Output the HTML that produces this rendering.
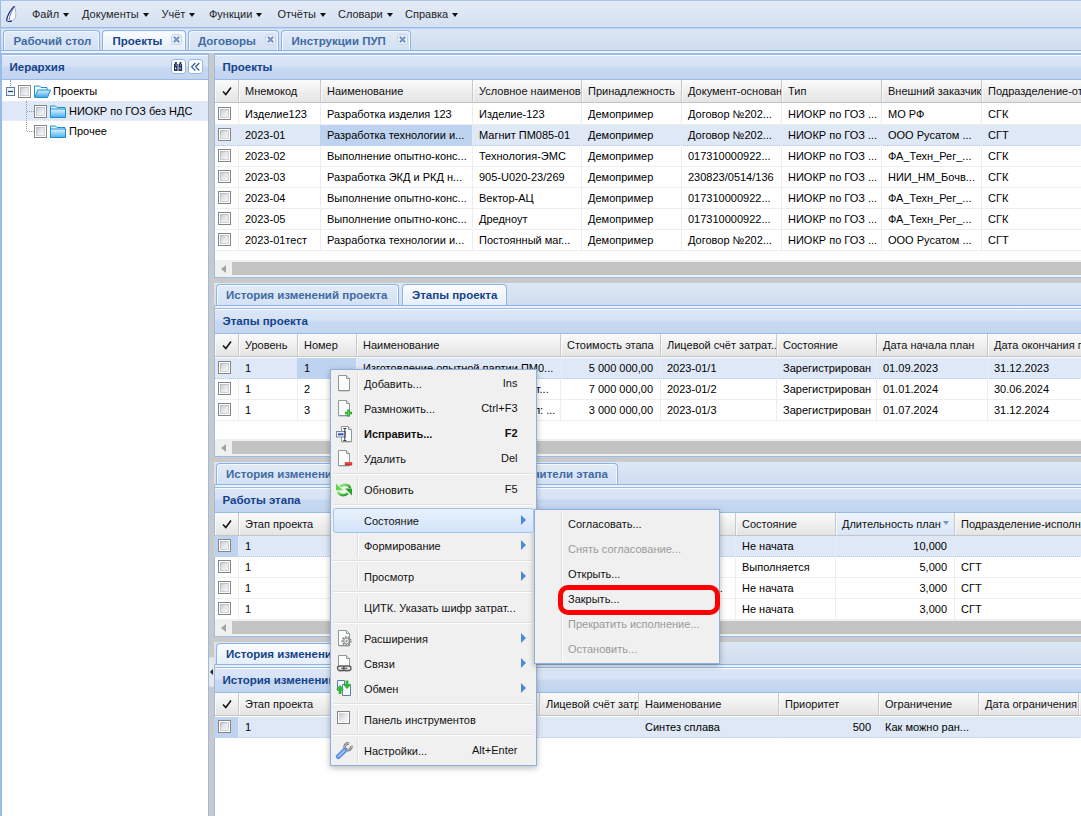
<!DOCTYPE html><html><head><meta charset="utf-8"><style>
*{margin:0;padding:0;box-sizing:border-box}
html,body{width:1081px;height:816px;overflow:hidden;background:#fff}
body{position:relative;font-family:"Liberation Sans",sans-serif;font-size:11px;color:#000}
.a{position:absolute}
.menubar{left:0;top:0;width:1081px;height:28px;background:linear-gradient(#e3ebf6,#d5e1f1);border-top:1px solid #a9c4e8;border-bottom:1px solid #99bbe8;border-left:1px solid #99bbe8}
.mi{position:absolute;top:8px;line-height:13px;color:#1e1e1e;white-space:nowrap}
.dd{display:inline-block;margin-left:4px;vertical-align:1px;width:0;height:0;border-left:3px solid transparent;border-right:3px solid transparent;border-top:4px solid #111}
.strip{position:absolute;background:linear-gradient(#dde8f5,#d0ddef);border-bottom:1px solid #8db2e3}
.strip2{position:absolute;height:3px;background:#eaf1fb;border-bottom:1px solid #99bbe8}
.tab{position:absolute;border:1px solid #8db2e3;border-bottom:none;border-radius:4px 4px 0 0;background:linear-gradient(#e2ebf7,#d3e1f3);box-shadow:inset 1px 1px 0 #f5f8fd,inset -1px 0 0 #f5f8fd}
.tab.act{background:linear-gradient(#fbfdff,#e4edf9);}
.tabt{position:absolute;font-weight:bold;font-size:11.5px;line-height:13px;color:#416aa3;white-space:nowrap}
.act .tabt{color:#15428b}
.cls{position:absolute;width:11px;height:11px;border:1px solid #c3d4ea;border-radius:3px;background:#eef3fa}
.ph{position:absolute;background:linear-gradient(#f6f9fd 0,#f6f9fd 1px,#dbe7f7 1px,#d6e3f5 11px,#c8d9f1 12px,#c2d5f0 100%);border-bottom:1px solid #99bbe8}
.pht{position:absolute;font-weight:bold;font-size:11.5px;line-height:13px;color:#15428b;white-space:nowrap}
.pb{position:absolute;border-left:1px solid #99bbe8;border-right:1px solid #99bbe8;border-bottom:1px solid #99bbe8;background:#fff}
.gh{position:absolute;height:23px;background:linear-gradient(#fbfbfb,#eeeeee 55%,#e4e4e4);border-bottom:1px solid #c5c5c5}
.ghc{position:absolute;top:0;height:22px;border-right:1px solid #c8c8c8;overflow:hidden;white-space:nowrap;line-height:22px;padding-left:7px;color:#111;box-shadow:inset 1px 0 0 #fafafa}
.ghc.sort{background:linear-gradient(#eef4fc,#d9e6f7)}
.row{position:absolute;height:21px;border-bottom:1px solid #ededed;background:#fff}
.row.sel{background:#dfe8f6;border-bottom:1px dotted #b3c7e3}
.c{position:absolute;top:0;height:21px;border-right:1px solid #ededed;overflow:hidden;white-space:nowrap;line-height:20px;padding:0 7px 0 7px;color:#000}
.sel .c{border-right-color:#e4ebf6}
.c.r{text-align:right}
.c.sc{background:#bed3f0}
.cb{position:absolute;width:13px;height:13px;border:1px solid #858585;background:#fff}.cb:after{content:'';position:absolute;left:1px;top:1px;width:9px;height:9px;background:linear-gradient(135deg,#c3c7cf,#e9eaee 55%,#f6f6f6);box-shadow:inset 0 0 0 1px rgba(150,155,165,.35)}
.sb{position:absolute;height:17px;background:#f0f0f0}
.thumb{position:absolute;top:2px;height:13px;background:#c3c3c3}
.sarr{position:absolute;top:5px;width:0;height:0;border-top:4px solid transparent;border-bottom:4px solid transparent;border-right:5px solid #a3a3a3}
.menu{position:absolute;background:#f0f0f0;border:1px solid #8eb0dc;box-shadow:0 2px 6px rgba(0,0,0,.28)}
.mit{position:absolute;line-height:13px;white-space:nowrap;color:#111;z-index:3}
.mit.dis{color:#9a9a9a}
.msep{position:absolute;height:2px;border-top:1px solid #e0e0e0;border-bottom:1px solid #fdfdfd}
.mvl{position:absolute;width:2px;border-left:1px solid #e0e0e0;border-right:1px solid #fdfdfd}
.marr{position:absolute;z-index:3;width:0;height:0;border-top:5px solid transparent;border-bottom:5px solid transparent;border-left:5px solid #4a8ad8}
.splitter{position:absolute;background:#c9c9c9}
</style></head><body>
<div class="a menubar"></div>
<div class="a" style="left:0;top:28px;width:1081px;height:1px;background:#bcd2ef;z-index:1"></div>
<svg class="a" style="left:0;top:0" width="26" height="28" viewBox="0 0 26 28"><path d="M14.6 6 C11 9.5 7.6 15 6.6 21.2 C8.5 21.9 10.6 21.4 12.2 20.6 C14 19.6 15.4 18.5 15.6 17 C16 13.5 15.6 9 14.6 6 Z" fill="#fbfcfe"/><path d="M14.6 6 C15.6 9 16 13.5 15.6 17 C15.2 18.8 13.5 20 11.5 20.9" fill="none" stroke="#9aa6bb" stroke-width="0.8"/><path d="M14.4 6.2 C10.8 9.8 7.2 15.5 6.6 20.6 C7 21.6 9.5 21.8 11.8 20.9" fill="none" stroke="#17257a" stroke-width="1.2"/><path d="M14.2 7 C12 10.5 9.6 15 9 20.5" fill="none" stroke="#3e53a6" stroke-width="0.8"/></svg>
<div class="mi" style="left:32px">Файл<span class="dd"></span></div>
<div class="mi" style="left:82px">Документы<span class="dd"></span></div>
<div class="mi" style="left:161.5px">Учёт<span class="dd"></span></div>
<div class="mi" style="left:209px">Функции<span class="dd"></span></div>
<div class="mi" style="left:277.5px">Отчёты<span class="dd"></span></div>
<div class="mi" style="left:338px">Словари<span class="dd"></span></div>
<div class="mi" style="left:405px">Справка<span class="dd"></span></div>
<div class="strip" style="left:0;top:28px;width:1081px;height:23px;border-left:1px solid #99bbe8"></div>
<div class="a" style="left:0;top:51px;width:1081px;height:2px;background:#ebf2fb;border-left:1px solid #99bbe8"></div>
<div class="tab" style="left:3px;top:30px;width:97px;height:20px"><div class="tabt" style="left:9.5px;top:4px">Рабочий стол</div></div>
<div class="tab act" style="left:102px;top:30px;width:84px;height:20px"><div class="tabt" style="left:9.5px;top:4px">Проекты</div><div class="cls" style="left:68px;top:3px"><svg width="9" height="9" style="position:absolute;left:0;top:0" viewBox="0 0 9 9"><path d="M1.8 1.8 L7.2 7.2 M7.2 1.8 L1.8 7.2" stroke="#7593c4" stroke-width="2"/></svg></div></div>
<div class="tab" style="left:188px;top:30px;width:91px;height:20px"><div class="tabt" style="left:9px;top:4px">Договоры</div><div class="cls" style="left:75.5px;top:3px"><svg width="9" height="9" style="position:absolute;left:0;top:0" viewBox="0 0 9 9"><path d="M1.8 1.8 L7.2 7.2 M7.2 1.8 L1.8 7.2" stroke="#7593c4" stroke-width="2"/></svg></div></div>
<div class="tab" style="left:281px;top:30px;width:130px;height:20px"><div class="tabt" style="left:9.5px;top:4px">Инструкции ПУП</div><div class="cls" style="left:114.5px;top:3px"><svg width="9" height="9" style="position:absolute;left:0;top:0" viewBox="0 0 9 9"><path d="M1.8 1.8 L7.2 7.2 M7.2 1.8 L1.8 7.2" stroke="#7593c4" stroke-width="2"/></svg></div></div>
<div class="a" style="left:0;top:53px;width:209px;height:763px;background:#fff;border:1px solid #99bbe8;border-top-width:2px;border-left-width:2px;border-bottom:none"></div>
<div class="ph" style="left:2px;top:55px;width:206px;height:25px"></div>
<div class="pht" style="left:9.5px;top:61px">Иерархия</div>
<div class="a" style="left:171px;top:59px;width:15px;height:15px;border:1px solid #93b6e6;border-radius:3px;background:#fdfeff"><svg width="13" height="13" style="position:absolute;left:0;top:0" viewBox="0 0 13 13"><path d="M3.2 2 h1.6 v2 h0.8 v7 h-3.6 v-7 h0.8 z M7.7 2 h1.6 v2 h0.8 v7 h-3.6 v-7 h0.8 z" fill="#1f2b5c"/><rect x="3" y="7.2" width="1.2" height="2.2" fill="#b9cdf5"/><rect x="7.5" y="7.2" width="1.2" height="2.2" fill="#b9cdf5"/><rect x="3.6" y="4.2" width="1" height="1.6" fill="#8fb0ea"/><rect x="8.1" y="4.2" width="1" height="1.6" fill="#8fb0ea"/></svg></div>
<div class="a" style="left:188px;top:59px;width:15px;height:15px;border:1px solid #93b6e6;border-radius:3px;background:#fdfeff"><svg width="13" height="13" style="position:absolute;left:0;top:0" viewBox="0 0 13 13"><path d="M6.3 3 L2.6 6.8 L6.3 10.5 M10.3 3 L6.6 6.8 L10.3 10.5" fill="none" stroke="#2d5796" stroke-width="1.15"/></svg></div>
<div class="a" style="left:2px;top:101px;width:206px;height:20px;background:#dfe8f6;border-top:1px dotted #e8eef7;border-bottom:1px dotted #eef2f8"></div>
<div class="a" style="left:10px;top:80px;height:6px;border-left:1px dotted #a0a0a0"></div>
<div class="a" style="left:26px;top:101px;height:30px;border-left:1px dotted #a0a0a0"></div>
<div class="a" style="left:27px;top:111px;width:7px;border-top:1px dotted #a0a0a0"></div>
<div class="a" style="left:27px;top:131px;width:7px;border-top:1px dotted #a0a0a0"></div>
<svg class="a" style="left:6px;top:87px" width="9" height="9" viewBox="0 0 9 9"><rect x="0.5" y="0.5" width="8" height="8" fill="#eef3fa" stroke="#5f7ba3"/><path d="M2 4.5 h5" stroke="#233e6b" stroke-width="1.2"/></svg>
<div class="cb" style="left:18px;top:85px"></div>
<svg class="a" style="left:34px;top:85px" width="17" height="13" viewBox="0 0 17 13"><defs><linearGradient id="fo" x1="0" y1="0" x2="0" y2="1"><stop offset="0" stop-color="#d8effd"/><stop offset="1" stop-color="#3aa6ec"/></linearGradient></defs><path d="M0.5 12 V1 h5 l1.5 1.5 h6 v2.5" fill="#eef8fe" stroke="#1d8fd6" stroke-width="1"/><path d="M0.8 12.5 L3.8 5 H16.5 L13.5 12.5 Z" fill="url(#fo)" stroke="#1d8fd6" stroke-width="1"/></svg>
<div class="a" style="left:53px;top:85px;line-height:13px;white-space:nowrap">Проекты</div>
<div class="cb" style="left:34px;top:105px"></div>
<svg class="a" style="left:50px;top:105px" width="16" height="13" viewBox="0 0 16 13"><defs><linearGradient id="fc" x1="0" y1="0" x2="0" y2="1"><stop offset="0" stop-color="#e6f5fe"/><stop offset="1" stop-color="#48b0ee"/></linearGradient></defs><path d="M0.5 12.5 V1 h5 l1.5 1.5 h8 v10 Z" fill="#d9f0fd" stroke="#1d8fd6" stroke-width="1"/><path d="M0.5 12.5 V4 h15 v8.5 Z" fill="url(#fc)" stroke="#1d8fd6" stroke-width="1"/></svg>
<div class="a" style="left:69px;top:105px;line-height:13px;white-space:nowrap">НИОКР по ГОЗ без НДС</div>
<div class="cb" style="left:34px;top:125px"></div>
<svg class="a" style="left:50px;top:125px" width="16" height="13" viewBox="0 0 16 13"><defs><linearGradient id="fc" x1="0" y1="0" x2="0" y2="1"><stop offset="0" stop-color="#e6f5fe"/><stop offset="1" stop-color="#48b0ee"/></linearGradient></defs><path d="M0.5 12.5 V1 h5 l1.5 1.5 h8 v10 Z" fill="#d9f0fd" stroke="#1d8fd6" stroke-width="1"/><path d="M0.5 12.5 V4 h15 v8.5 Z" fill="url(#fc)" stroke="#1d8fd6" stroke-width="1"/></svg>
<div class="a" style="left:69px;top:125px;line-height:13px;white-space:nowrap">Прочее</div>
<div class="splitter" style="left:209px;top:53px;width:5px;height:763px"></div>
<div class="a" style="left:214px;top:53px;width:867px;height:1px;background:#99bbe8"></div>
<div class="pb" style="left:214px;top:54px;width:868px;height:224px;border-top:1px solid #99bbe8"></div>
<div class="ph" style="left:215px;top:55px;width:867px;height:25px"></div>
<div class="pht" style="left:222.5px;top:61px">Проекты</div>
<div class="gh" style="left:215px;top:80px;width:867px;height:23px">
<div class="ghc" style="left:0px;width:24px;height:22px"><svg style="position:absolute;left:7px;top:6px" width="10" height="10" viewBox="0 0 10 10"><path d="M1 5.5 L3.8 8.5 L9 1.5" fill="none" stroke="#111" stroke-width="1.5"/></svg></div>
<div class="ghc" style="left:24px;width:82px;height:22px;padding-left:6px">Мнемокод</div>
<div class="ghc" style="left:106px;width:152px;height:22px;padding-left:6px">Наименование</div>
<div class="ghc" style="left:258px;width:109px;height:22px;padding-left:6px">Условное наименование</div>
<div class="ghc" style="left:367px;width:100px;height:22px;padding-left:6px">Принадлежность</div>
<div class="ghc" style="left:467px;width:100px;height:22px;padding-left:6px">Документ-основание</div>
<div class="ghc" style="left:567px;width:100px;height:22px;padding-left:6px">Тип</div>
<div class="ghc" style="left:667px;width:100px;height:22px;padding-left:6px">Внешний заказчик</div>
<div class="ghc" style="left:767px;width:139px;height:22px;padding-left:6px">Подразделение-ответственный</div>
</div>
<div class="row" style="left:215px;top:104px;width:867px">
<div class="c" style="left:-1px;width:25px"><div class="cb" style="left:4px;top:3px"></div></div>
<div class="c" style="left:23px;width:83px">Изделие123</div>
<div class="c" style="left:105px;width:153px">Разработка изделия 123</div>
<div class="c" style="left:257px;width:110px">Изделие-123</div>
<div class="c" style="left:366px;width:101px">Демопример</div>
<div class="c" style="left:466px;width:101px">Договор №202...</div>
<div class="c" style="left:566px;width:101px">НИОКР по ГОЗ ...</div>
<div class="c" style="left:666px;width:101px">МО РФ</div>
<div class="c" style="left:766px;width:140px">СГК</div>
</div>
<div class="row sel" style="left:215px;top:125px;width:867px">
<div class="c" style="left:-1px;width:25px"><div class="cb" style="left:4px;top:3px"></div></div>
<div class="c" style="left:23px;width:83px">2023-01</div>
<div class="c sc" style="left:105px;width:153px">Разработка технологии и...</div>
<div class="c" style="left:257px;width:110px">Магнит ПМ085-01</div>
<div class="c" style="left:366px;width:101px">Демопример</div>
<div class="c" style="left:466px;width:101px">Договор №202...</div>
<div class="c" style="left:566px;width:101px">НИОКР по ГОЗ ...</div>
<div class="c" style="left:666px;width:101px">ООО Русатом ...</div>
<div class="c" style="left:766px;width:140px">СГТ</div>
</div>
<div class="row" style="left:215px;top:146px;width:867px">
<div class="c" style="left:-1px;width:25px"><div class="cb" style="left:4px;top:3px"></div></div>
<div class="c" style="left:23px;width:83px">2023-02</div>
<div class="c" style="left:105px;width:153px">Выполнение опытно-конс...</div>
<div class="c" style="left:257px;width:110px">Технология-ЭМС</div>
<div class="c" style="left:366px;width:101px">Демопример</div>
<div class="c" style="left:466px;width:101px">017310000922...</div>
<div class="c" style="left:566px;width:101px">НИОКР по ГОЗ ...</div>
<div class="c" style="left:666px;width:101px">ФА_Техн_Рег_...</div>
<div class="c" style="left:766px;width:140px">СГК</div>
</div>
<div class="row" style="left:215px;top:167px;width:867px">
<div class="c" style="left:-1px;width:25px"><div class="cb" style="left:4px;top:3px"></div></div>
<div class="c" style="left:23px;width:83px">2023-03</div>
<div class="c" style="left:105px;width:153px">Разработка ЭКД и РКД н...</div>
<div class="c" style="left:257px;width:110px">905-U020-23/269</div>
<div class="c" style="left:366px;width:101px">Демопример</div>
<div class="c" style="left:466px;width:101px">230823/0514/136</div>
<div class="c" style="left:566px;width:101px">НИОКР по ГОЗ ...</div>
<div class="c" style="left:666px;width:101px">НИИ_НМ_Бочв...</div>
<div class="c" style="left:766px;width:140px">СГК</div>
</div>
<div class="row" style="left:215px;top:188px;width:867px">
<div class="c" style="left:-1px;width:25px"><div class="cb" style="left:4px;top:3px"></div></div>
<div class="c" style="left:23px;width:83px">2023-04</div>
<div class="c" style="left:105px;width:153px">Выполнение опытно-конс...</div>
<div class="c" style="left:257px;width:110px">Вектор-АЦ</div>
<div class="c" style="left:366px;width:101px">Демопример</div>
<div class="c" style="left:466px;width:101px">017310000922...</div>
<div class="c" style="left:566px;width:101px">НИОКР по ГОЗ ...</div>
<div class="c" style="left:666px;width:101px">ФА_Техн_Рег_...</div>
<div class="c" style="left:766px;width:140px">СГК</div>
</div>
<div class="row" style="left:215px;top:209px;width:867px">
<div class="c" style="left:-1px;width:25px"><div class="cb" style="left:4px;top:3px"></div></div>
<div class="c" style="left:23px;width:83px">2023-05</div>
<div class="c" style="left:105px;width:153px">Выполнение опытно-конс...</div>
<div class="c" style="left:257px;width:110px">Дредноут</div>
<div class="c" style="left:366px;width:101px">Демопример</div>
<div class="c" style="left:466px;width:101px">017310000922...</div>
<div class="c" style="left:566px;width:101px">НИОКР по ГОЗ ...</div>
<div class="c" style="left:666px;width:101px">ФА_Техн_Рег_...</div>
<div class="c" style="left:766px;width:140px">СГК</div>
</div>
<div class="row" style="left:215px;top:230px;width:867px">
<div class="c" style="left:-1px;width:25px"><div class="cb" style="left:4px;top:3px"></div></div>
<div class="c" style="left:23px;width:83px">2023-01тест</div>
<div class="c" style="left:105px;width:153px">Разработка технологии и...</div>
<div class="c" style="left:257px;width:110px">Постоянный маг...</div>
<div class="c" style="left:366px;width:101px">Демопример</div>
<div class="c" style="left:466px;width:101px">Договор №202...</div>
<div class="c" style="left:566px;width:101px">НИОКР по ГОЗ ...</div>
<div class="c" style="left:666px;width:101px">ООО Русатом ...</div>
<div class="c" style="left:766px;width:140px">СГТ</div>
</div>
<div class="sb" style="left:215px;top:260px;width:867px"><div class="sarr" style="left:6px"></div><div class="thumb" style="left:17px;width:849px"></div></div>
<div class="splitter" style="left:214px;top:278px;width:867px;height:5px"></div>
<div class="strip" style="left:214px;top:283px;width:867px;height:23px;border-left:1px solid #d6e4f5"></div>
<div class="a" style="left:214px;top:306px;width:867px;height:2px;background:#ebf2fb;border-left:1px solid #99bbe8"></div>
<div class="tab" style="left:216px;top:284px;width:183px;height:21px"><div class="tabt" style="left:9px;top:4px">История изменений проекта</div></div>
<div class="tab act" style="left:402px;top:284px;width:105px;height:21px"><div class="tabt" style="left:9px;top:4px">Этапы проекта</div></div>
<div class="pb" style="left:214px;top:308px;width:868px;height:149px;border-top:1px solid #99bbe8"></div>
<div class="ph" style="left:215px;top:309px;width:867px;height:25px"></div>
<div class="pht" style="left:222.5px;top:315px">Этапы проекта</div>
<div class="gh" style="left:215px;top:334px;width:867px;height:23px">
<div class="ghc" style="left:0px;width:24px;height:22px"><svg style="position:absolute;left:7px;top:6px" width="10" height="10" viewBox="0 0 10 10"><path d="M1 5.5 L3.8 8.5 L9 1.5" fill="none" stroke="#111" stroke-width="1.5"/></svg></div>
<div class="ghc" style="left:24px;width:59px;height:22px;padding-left:6px">Уровень</div>
<div class="ghc" style="left:83px;width:59px;height:22px;padding-left:6px">Номер</div>
<div class="ghc" style="left:142px;width:204px;height:22px;padding-left:6px">Наименование</div>
<div class="ghc" style="left:346px;width:100px;height:22px;padding-left:6px">Стоимость этапа</div>
<div class="ghc" style="left:446px;width:116px;height:22px;padding-left:6px">Лицевой счёт затрат...</div>
<div class="ghc" style="left:562px;width:100px;height:22px;padding-left:6px">Состояние</div>
<div class="ghc" style="left:662px;width:111px;height:22px;padding-left:6px">Дата начала план</div>
<div class="ghc" style="left:773px;width:133px;height:22px;padding-left:6px">Дата окончания план</div>
</div>
<div class="row sel" style="left:215px;top:358px;width:867px">
<div class="c" style="left:-1px;width:25px"><div class="cb" style="left:4px;top:3px"></div></div>
<div class="c" style="left:23px;width:60px">1</div>
<div class="c sc" style="left:82px;width:60px">1</div>
<div class="c" style="left:141px;width:205px">Изготовление опытной партии ПМ0...</div>
<div class="c r" style="left:345px;width:101px">5 000 000,00</div>
<div class="c" style="left:445px;width:117px">2023-01/1</div>
<div class="c" style="left:561px;width:101px">Зарегистрирован</div>
<div class="c" style="left:661px;width:112px">01.09.2023</div>
<div class="c" style="left:772px;width:134px">31.12.2023</div>
</div>
<div class="row" style="left:215px;top:379px;width:867px">
<div class="c" style="left:-1px;width:25px"><div class="cb" style="left:4px;top:3px"></div></div>
<div class="c" style="left:23px;width:60px">1</div>
<div class="c" style="left:82px;width:60px">2</div>
<div class="c" style="left:141px;width:205px">Изготовление макетного образца т...</div>
<div class="c r" style="left:345px;width:101px">7 000 000,00</div>
<div class="c" style="left:445px;width:117px">2023-01/2</div>
<div class="c" style="left:561px;width:101px">Зарегистрирован</div>
<div class="c" style="left:661px;width:112px">01.01.2024</div>
<div class="c" style="left:772px;width:134px">30.06.2024</div>
</div>
<div class="row" style="left:215px;top:400px;width:867px">
<div class="c" style="left:-1px;width:25px"><div class="cb" style="left:4px;top:3px"></div></div>
<div class="c" style="left:23px;width:60px">1</div>
<div class="c" style="left:82px;width:60px">3</div>
<div class="c" style="left:141px;width:205px">Проведение предварительных исп: ...</div>
<div class="c r" style="left:345px;width:101px">3 000 000,00</div>
<div class="c" style="left:445px;width:117px">2023-01/3</div>
<div class="c" style="left:561px;width:101px">Зарегистрирован</div>
<div class="c" style="left:661px;width:112px">01.07.2024</div>
<div class="c" style="left:772px;width:134px">31.12.2024</div>
</div>
<div class="sb" style="left:215px;top:439px;width:867px"><div class="sarr" style="left:6px"></div><div class="thumb" style="left:17px;width:849px"></div></div>
<div class="splitter" style="left:214px;top:457px;width:867px;height:5px"></div>
<div class="strip" style="left:214px;top:462px;width:867px;height:23px;border-left:1px solid #d6e4f5"></div>
<div class="a" style="left:214px;top:485px;width:867px;height:2px;background:#ebf2fb;border-left:1px solid #99bbe8"></div>
<div class="tab" style="left:216px;top:463px;width:168px;height:21px"><div class="tabt" style="left:9px;top:4px">История изменений этапа</div></div>
<div class="tab act" style="left:387px;top:463px;width:97px;height:21px"><div class="tabt" style="left:9px;top:4px">Работы этапа</div></div>
<div class="tab" style="left:487px;top:463px;width:131px;height:21px"><div class="tabt" style="left:9px;top:4px">Исполнители этапа</div></div>
<div class="pb" style="left:214px;top:487px;width:868px;height:150px;border-top:1px solid #99bbe8"></div>
<div class="ph" style="left:215px;top:488px;width:867px;height:25px"></div>
<div class="pht" style="left:222.5px;top:494px">Работы этапа</div>
<div class="gh" style="left:215px;top:513px;width:867px;height:23px">
<div class="ghc" style="left:0px;width:24px;height:22px"><svg style="position:absolute;left:7px;top:6px" width="10" height="10" viewBox="0 0 10 10"><path d="M1 5.5 L3.8 8.5 L9 1.5" fill="none" stroke="#111" stroke-width="1.5"/></svg></div>
<div class="ghc" style="left:24px;width:162px;height:22px;padding-left:6px">Этап проекта</div>
<div class="ghc" style="left:186px;width:160px;height:22px;padding-left:6px">Наименование</div>
<div class="ghc" style="left:346px;width:175px;height:22px;padding-left:6px">Исполнитель</div>
<div class="ghc" style="left:521px;width:100px;height:22px;padding-left:6px">Состояние</div>
<div class="ghc sort" style="left:621px;width:119px;height:22px;padding-left:6px">Длительность план<span style="position:absolute;left:107px;top:8px;width:0;height:0;border-left:3.5px solid transparent;border-right:3.5px solid transparent;border-top:4px solid #6a98d6"></span></div>
<div class="ghc" style="left:740px;width:166px;height:22px;padding-left:6px">Подразделение-исполнитель</div>
</div>
<div class="row sel" style="left:215px;top:536px;width:867px">
<div class="c sc" style="left:-1px;width:25px"><div class="cb" style="left:4px;top:3px"></div></div>
<div class="c" style="left:23px;width:163px">1</div>
<div class="c" style="left:185px;width:161px">Работа 1</div>
<div class="c" style="left:345px;width:176px">Иванов И.И.</div>
<div class="c" style="left:520px;width:101px">Не начата</div>
<div class="c r" style="left:620px;width:120px">10,000</div>
<div class="c" style="left:739px;width:167px"></div>
</div>
<div class="row" style="left:215px;top:557px;width:867px">
<div class="c" style="left:-1px;width:25px"><div class="cb" style="left:4px;top:3px"></div></div>
<div class="c" style="left:23px;width:163px">1</div>
<div class="c" style="left:185px;width:161px">Работа 2</div>
<div class="c" style="left:345px;width:176px">Петров П.П.</div>
<div class="c" style="left:520px;width:101px">Выполняется</div>
<div class="c r" style="left:620px;width:120px">5,000</div>
<div class="c" style="left:739px;width:167px">СГТ</div>
</div>
<div class="row" style="left:215px;top:578px;width:867px">
<div class="c" style="left:-1px;width:25px"><div class="cb" style="left:4px;top:3px"></div></div>
<div class="c" style="left:23px;width:163px">1</div>
<div class="c" style="left:185px;width:161px">Работа 3</div>
<div class="c" style="left:345px;width:176px">Ответственный исполнитель...</div>
<div class="c" style="left:520px;width:101px">Не начата</div>
<div class="c r" style="left:620px;width:120px">3,000</div>
<div class="c" style="left:739px;width:167px">СГТ</div>
</div>
<div class="row" style="left:215px;top:599px;width:867px">
<div class="c" style="left:-1px;width:25px"><div class="cb" style="left:4px;top:3px"></div></div>
<div class="c" style="left:23px;width:163px">1</div>
<div class="c" style="left:185px;width:161px">Работа 4</div>
<div class="c" style="left:345px;width:176px">Иванов И.И.</div>
<div class="c" style="left:520px;width:101px">Не начата</div>
<div class="c r" style="left:620px;width:120px">3,000</div>
<div class="c" style="left:739px;width:167px">СГТ</div>
</div>
<div class="sb" style="left:215px;top:619px;width:867px"><div class="sarr" style="left:6px"></div><div class="thumb" style="left:17px;width:849px"></div></div>
<div class="splitter" style="left:214px;top:637px;width:867px;height:5px"></div>
<div class="strip" style="left:214px;top:642px;width:867px;height:23px;border-left:1px solid #d6e4f5"></div>
<div class="a" style="left:214px;top:665px;width:867px;height:2px;background:#ebf2fb;border-left:1px solid #99bbe8"></div>
<div class="tab act" style="left:216px;top:643px;width:174px;height:21px"><div class="tabt" style="left:9px;top:4px">История изменений работы</div></div>
<div class="tab" style="left:393px;top:643px;width:127px;height:21px"><div class="tabt" style="left:9px;top:4px">Ресурсы работы</div></div>
<div class="pb" style="left:214px;top:667px;width:868px;height:234px;border-top:1px solid #99bbe8"></div>
<div class="ph" style="left:215px;top:668px;width:867px;height:25px"></div>
<div class="pht" style="left:222.5px;top:674px">История изменений работы</div>
<div class="gh" style="left:215px;top:693px;width:867px;height:23px">
<div class="ghc" style="left:0px;width:24px;height:22px"><svg style="position:absolute;left:7px;top:6px" width="10" height="10" viewBox="0 0 10 10"><path d="M1 5.5 L3.8 8.5 L9 1.5" fill="none" stroke="#111" stroke-width="1.5"/></svg></div>
<div class="ghc" style="left:24px;width:162px;height:22px;padding-left:6px">Этап проекта</div>
<div class="ghc" style="left:186px;width:139px;height:22px;padding-left:6px">Работа</div>
<div class="ghc" style="left:325px;width:99px;height:22px;padding-left:6px">Лицевой счёт затрат</div>
<div class="ghc" style="left:424px;width:140px;height:22px;padding-left:6px">Наименование</div>
<div class="ghc" style="left:564px;width:100px;height:22px;padding-left:6px">Приоритет</div>
<div class="ghc" style="left:664px;width:100px;height:22px;padding-left:6px">Ограничение</div>
<div class="ghc" style="left:764px;width:100px;height:22px;padding-left:6px">Дата ограничения</div>
<div class="ghc" style="left:864px;width:42px;height:22px;padding-left:6px"></div>
</div>
<div class="row sel" style="left:215px;top:717px;width:867px">
<div class="c sc" style="left:-1px;width:25px"><div class="cb" style="left:4px;top:3px"></div></div>
<div class="c" style="left:23px;width:163px">1</div>
<div class="c" style="left:185px;width:140px">Работа 1</div>
<div class="c" style="left:324px;width:100px"></div>
<div class="c" style="left:423px;width:141px">Синтез сплава</div>
<div class="c r" style="left:563px;width:101px">500</div>
<div class="c" style="left:663px;width:101px">Как можно ран...</div>
<div class="c" style="left:763px;width:101px"></div>
<div class="c" style="left:863px;width:43px"></div>
</div>
<div class="a" style="left:214px;top:738px;width:1px;height:78px;background:#99bbe8"></div>
<div class="a" style="left:209px;top:657px;width:5px;height:30px;background:#e8e8e8;border-radius:2px"></div>
<div class="a" style="left:210px;top:669px;width:0;height:0;border-top:3px solid transparent;border-bottom:3px solid transparent;border-right:3px solid #222"></div>
<div class="menu" style="left:330px;top:369px;width:207px;height:397px"></div>
<div class="mit" style="left:364px;top:378px;">Добавить...</div>
<div class="mit" style="right:563.5px;top:377px;">Ins</div>
<div class="a" style="left:335px;top:375px;width:18px;height:18px"><svg width="18" height="18" viewBox="0 0 18 18"><path d="M3.5 0.5 h8 l3 3 v12 h-11 z" fill="#fbfcfc" stroke="#8d9a9a"/><path d="M11.5 0.5 v3 h3" fill="#dde4e4" stroke="#8d9a9a"/><path d="M3.5 16 h11" stroke="#7b8585" stroke-opacity=".55"/></svg></div>
<div class="mit" style="left:364px;top:403px;">Размножить...</div>
<div class="mit" style="right:563.5px;top:402px;">Ctrl+F3</div>
<div class="a" style="left:335px;top:400px;width:18px;height:18px"><svg width="18" height="18" viewBox="0 0 18 18"><path d="M3.5 0.5 h8 l3 3 v12 h-11 z" fill="#fbfcfc" stroke="#8d9a9a"/><path d="M11.5 0.5 v3 h3" fill="#dde4e4" stroke="#8d9a9a"/><path d="M3.5 16 h11" stroke="#7b8585" stroke-opacity=".55"/><path d="M13.5 9.5 v7 M10 13 h7" stroke="#1f9e1f" stroke-width="2.6"/><path d="M13.5 10.2 v5.6 M10.7 13 h5.6" stroke="#5ad44c" stroke-width="1.1"/></svg></div>
<div class="mit" style="left:364px;top:428px;font-weight:bold;">Исправить...</div>
<div class="mit" style="right:563.5px;top:427px;font-weight:bold;">F2</div>
<div class="a" style="left:335px;top:425px;width:18px;height:18px"><svg width="18" height="18" viewBox="0 0 18 18"><path d="M6.5 1.5 h7 l3 3 v12 h-10 z" fill="#fbfdfd" stroke="#8d9a9a"/><path d="M13.5 1.5 v3 h3" fill="#dde4e4" stroke="#8d9a9a"/><path d="M6.5 17 h10" stroke="#7b8585" stroke-opacity=".6"/><rect x="1.5" y="6.5" width="9" height="5.5" fill="#eef2f8" stroke="#7f8ba0"/><rect x="3" y="8.3" width="5.5" height="2" fill="#2a55d8"/><path d="M8.3 3.5 h3 M9.8 3.5 v12 M8.3 15.5 h3" stroke="#2a2a2a" stroke-width="0.9"/></svg></div>
<div class="mit" style="left:364px;top:453px;">Удалить</div>
<div class="mit" style="right:563.5px;top:452px;">Del</div>
<div class="a" style="left:335px;top:450px;width:18px;height:18px"><svg width="18" height="18" viewBox="0 0 18 18"><path d="M3.5 0.5 h8 l3 3 v12 h-11 z" fill="#fbfcfc" stroke="#8d9a9a"/><path d="M11.5 0.5 v3 h3" fill="#dde4e4" stroke="#8d9a9a"/><path d="M3.5 16 h11" stroke="#7b8585" stroke-opacity=".55"/><rect x="9.8" y="12" width="7.4" height="3.4" rx="1.2" fill="#d42c2c"/><rect x="10.5" y="12.5" width="6" height="1" fill="#f06a6a"/></svg></div>
<div class="msep" style="left:333px;top:473px;width:200px"></div>
<div class="mit" style="left:364px;top:484px;">Обновить</div>
<div class="mit" style="right:563.5px;top:483px;">F5</div>
<div class="a" style="left:335px;top:481px;width:18px;height:18px"><svg width="18" height="18" viewBox="0 0 18 18"><defs><linearGradient id="gg" x1="0" y1="0" x2="1" y2="1"><stop offset="0" stop-color="#8ef07a"/><stop offset="1" stop-color="#1d971d"/></linearGradient></defs><path d="M15.2 7 C14 3.6 9 2.4 5.2 5.4" fill="none" stroke="url(#gg)" stroke-width="2.4"/><path d="M1 2.5 L1 9.2 L7.8 9.2 Z" fill="#5fd84e"/><path d="M2.8 10.6 C4.2 14.4 9.4 15.4 13 12.4" fill="none" stroke="url(#gg)" stroke-width="2.4"/><path d="M17 14.5 L17 7.5 L10.2 7.5 Z" fill="#25a325"/></svg></div>
<div class="msep" style="left:333px;top:504px;width:200px"></div>
<div class="a" style="left:333px;top:508px;width:201px;height:25px;border:1px solid #a3c6f0;border-radius:3px;background:linear-gradient(#e9f2fd,#d3e3f8);z-index:2"></div>
<div class="mit" style="left:364px;top:515px;">Состояние</div>
<div class="marr" style="left:521px;top:515px"></div>
<div class="mit" style="left:364px;top:540px;">Формирование</div>
<div class="marr" style="left:521px;top:540px"></div>
<div class="msep" style="left:333px;top:560px;width:200px"></div>
<div class="mit" style="left:364px;top:571px;">Просмотр</div>
<div class="marr" style="left:521px;top:571px"></div>
<div class="msep" style="left:333px;top:591px;width:200px"></div>
<div class="mit" style="left:364px;top:602px;">ЦИТК. Указать шифр затрат...</div>
<div class="msep" style="left:333px;top:622px;width:200px"></div>
<div class="mit" style="left:364px;top:633px;">Расширения</div>
<div class="marr" style="left:521px;top:633px"></div>
<div class="a" style="left:335px;top:630px;width:18px;height:18px"><svg width="18" height="18" viewBox="0 0 18 18"><path d="M3.5 0.5 h8 l3 3 v12 h-11 z" fill="#fbfcfc" stroke="#8d9a9a"/><path d="M11.5 0.5 v3 h3" fill="#dde4e4" stroke="#8d9a9a"/><path d="M3.5 16 h11" stroke="#7b8585" stroke-opacity=".55"/><circle cx="11.5" cy="11" r="4" fill="none" stroke="#8a8a8a" stroke-width="2.2" stroke-dasharray="1.6 1.2"/><circle cx="11.5" cy="11" r="2.8" fill="#efefef" stroke="#8a8a8a" stroke-width="1"/><circle cx="11.5" cy="11" r="1" fill="#8a8a8a"/></svg></div>
<div class="mit" style="left:364px;top:658px;">Связи</div>
<div class="marr" style="left:521px;top:658px"></div>
<div class="a" style="left:335px;top:655px;width:18px;height:18px"><svg width="18" height="18" viewBox="0 0 18 18"><path d="M3.5 0.5 h8 l3 3 v12 h-11 z" fill="#fbfcfc" stroke="#8d9a9a"/><path d="M11.5 0.5 v3 h3" fill="#dde4e4" stroke="#8d9a9a"/><path d="M3.5 16 h11" stroke="#7b8585" stroke-opacity=".55"/><rect x="2.5" y="11" width="7.5" height="4.5" rx="2.2" fill="#ececec" stroke="#5a5a5a" stroke-width="1.3"/><rect x="8.5" y="11" width="7.5" height="4.5" rx="2.2" fill="#ececec" stroke="#5a5a5a" stroke-width="1.3"/><path d="M6.2 13.25 h6" stroke="#5a5a5a" stroke-width="1.2"/></svg></div>
<div class="mit" style="left:364px;top:683px;">Обмен</div>
<div class="marr" style="left:521px;top:683px"></div>
<div class="a" style="left:335px;top:680px;width:18px;height:18px"><svg width="18" height="18" viewBox="0 0 18 18"><path d="M2.5 0.5 h7 v10 h-7 z" fill="#f4f8fc" stroke="#5b7db5"/><path d="M7.5 4.5 h8 v11 h-8 z" fill="#f4f8fc" stroke="#5b7db5"/><path d="M5 5 L1 9.5 H3.6 V14 H6.4 V9.5 H9 Z" fill="#2db82d"/><path d="M12 9 L16 4.5 H13.4 V0.5 H10.6 V4.5 H8 Z" fill="#2db82d"/></svg></div>
<div class="msep" style="left:333px;top:703px;width:200px"></div>
<div class="mit" style="left:364px;top:714px;">Панель инструментов</div>
<div class="a" style="left:335px;top:711px;width:18px;height:18px"><svg width="18" height="18" viewBox="0 0 18 18"><defs><linearGradient id="cg" x1="0" y1="0" x2="1" y2="1"><stop offset="0" stop-color="#c3c7cf"/><stop offset=".55" stop-color="#e9eaee"/><stop offset="1" stop-color="#f6f6f6"/></linearGradient></defs><rect x="2.5" y="0.5" width="12" height="12" fill="#fff" stroke="#858585"/><rect x="4" y="2" width="9" height="9" fill="url(#cg)"/></svg></div>
<div class="msep" style="left:333px;top:734px;width:200px"></div>
<div class="mit" style="left:364px;top:745px;">Настройки...</div>
<div class="mit" style="right:563.5px;top:744px;">Alt+Enter</div>
<div class="a" style="left:335px;top:742px;width:18px;height:18px"><svg width="18" height="18" viewBox="0 0 18 18"><path d="M14.1 1.7 A3.3 3.3 0 1 0 16.1 3.7" fill="none" stroke="#7d7d7d" stroke-width="2.8"/><path d="M14.1 1.7 A3.3 3.3 0 1 0 16.1 3.7" fill="none" stroke="#cfcfcf" stroke-width="1"/><path d="M3.4 14.6 L9.6 8.4" stroke="#5b8ee2" stroke-width="5" stroke-linecap="round"/><path d="M3.6 14.4 L9.4 8.6" stroke="#a6c5f4" stroke-width="1.8" stroke-linecap="round"/></svg></div>
<div class="mvl" style="left:357px;top:371px;height:100px"></div>
<div class="mvl" style="left:357px;top:477px;height:25px"></div>
<div class="mvl" style="left:357px;top:508px;height:50px"></div>
<div class="mvl" style="left:357px;top:564px;height:25px"></div>
<div class="mvl" style="left:357px;top:595px;height:25px"></div>
<div class="mvl" style="left:357px;top:626px;height:75px"></div>
<div class="mvl" style="left:357px;top:707px;height:25px"></div>
<div class="mvl" style="left:357px;top:738px;height:25px"></div>
<div class="menu" style="left:534px;top:509px;width:186px;height:155px"></div>
<div class="mvl" style="left:561px;top:511px;height:151px"></div>
<div class="mit" style="left:568px;top:518px">Согласовать...</div>
<div class="mit dis" style="left:568px;top:543px">Снять согласование...</div>
<div class="mit" style="left:568px;top:568px">Открыть...</div>
<div class="mit" style="left:568px;top:593px">Закрыть...</div>
<div class="mit dis" style="left:568px;top:618px">Прекратить исполнение...</div>
<div class="mit dis" style="left:568px;top:643px">Остановить...</div>
<div class="a" style="left:558px;top:585px;width:162px;height:30px;border:5px solid #ff0000;border-radius:10px"></div>
</body></html>
